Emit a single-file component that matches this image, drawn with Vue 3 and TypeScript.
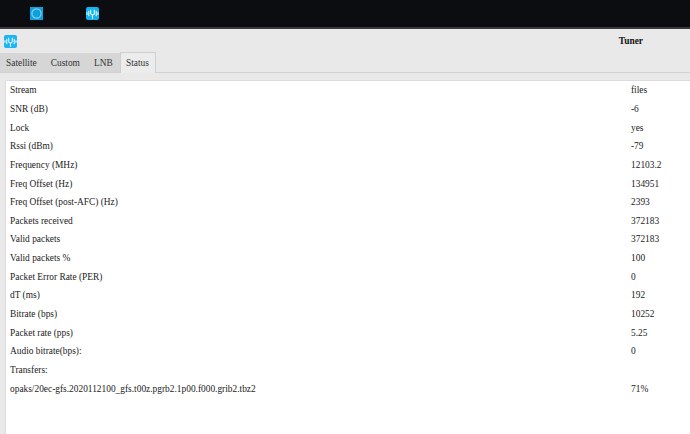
<script setup lang="ts">
const rows: [string, string][] = [
  ['Stream', 'files'], ['SNR (dB)', '-6'], ['Lock', 'yes'], ['Rssi (dBm)', '-79'],
  ['Frequency (MHz)', '12103.2'], ['Freq Offset (Hz)', '134951'], ['Freq Offset (post-AFC) (Hz)', '2393'],
  ['Packets received', '372183'], ['Valid packets', '372183'], ['Valid packets %', '100'],
  ['Packet Error Rate (PER)', '0'], ['dT (ms)', '192'], ['Bitrate (bps)', '10252'],
  ['Packet rate (pps)', '5.25'], ['Audio bitrate(bps):', '0'], ['Transfers:', ''],
  ['opaks/20ec-gfs.2020112100_gfs.t00z.pgrb2.1p00.f000.grib2.tbz2', '71%'],
]
const tabs = ['Satellite', 'Custom', 'LNB']
const logo = 'M6.5 8v3.5M4.7 3v3.3C4.7 7.4 5.5 8 6.5 8s1.8-.6 1.8-1.7V3M2.8 4.3v4.4M10.2 4.3v4.4M1 5.6v1.8M12 5.6v1.8'
</script>

<template>
  <div class="page">
    <div class="taskbar">
      <span class="task-icon square">
        <svg width="13" height="13" viewBox="0 0 13 13"><circle cx="6.5" cy="6.5" r="4.6" fill="none" stroke="#7fd0f2" stroke-width="1.2" /></svg>
      </span>
      <span class="task-icon rounded">
        <svg width="13" height="13" viewBox="0 0 13 13"><path :d="logo" fill="none" stroke="#e4f7ff" stroke-width="1.1" stroke-linecap="round" /></svg>
      </span>
    </div>
    <div class="window">
      <div class="title-row">
        <span class="app-icon">
          <svg width="13" height="13" viewBox="0 0 13 13"><path :d="logo" fill="none" stroke="#e4f7ff" stroke-width="1.1" stroke-linecap="round" /></svg>
        </span>
        <span class="title">Tuner</span>
      </div>
      <div class="tabline">
        <div class="tabbar">
          <span v-for="t in tabs" :key="t" class="tab">{{ t }}</span>
        </div>
        <span class="tab active">Status</span>
      </div>
      <div class="panel">
        <div v-for="r in rows" :key="r[0]" class="row">
          <span class="label">{{ r[0] }}</span>
          <span class="value">{{ r[1] }}</span>
        </div>
      </div>
    </div>
  </div>
</template>

<style>
html, body { margin: 0; overflow: hidden; }
</style>

<style scoped>
.page {
  width: 690px;
  height: 434px;
  display: flex;
  flex-direction: column;
  overflow: hidden;
  font-family: "Liberation Serif", serif;
  font-size: 9.4px;
  color: #222;
}
.taskbar {
  height: 29px;
  flex: none;
  box-sizing: border-box;
  background: #0c0d11;
  border-bottom: 2px solid #3a3a3a;
  display: flex;
  align-items: center;
  padding: 0 0 0 30px;
  gap: 43px;
}
.task-icon {
  width: 13px;
  height: 13px;
  display: block;
  background: #0f9fdc;
}
.task-icon.rounded { background: #12b4f2; border-radius: 2px; }
.task-icon svg, .app-icon svg { display: block; }
.window {
  flex: 1;
  min-height: 0;
  display: flex;
  flex-direction: column;
  background: #e9e9e9;
}
.title-row {
  height: 23px;
  flex: none;
  display: flex;
  justify-content: space-between;
  align-items: flex-start;
  padding: 6px 47px 0 4px;
  box-sizing: border-box;
}
.app-icon {
  width: 13px;
  height: 13px;
  background: #1bb4f5;
  border-radius: 2px;
}
.title { font-weight: bold; font-size: 9.4px; color: #111; line-height: 12px; }
.tabline {
  height: 21px;
  flex: none;
  box-sizing: border-box;
  display: flex;
  border-bottom: 1px solid #d2d2d2;
}
.tabbar {
  display: flex;
  width: 120px;
  margin-top: 1px;
  padding-left: 6px;
  box-sizing: border-box;
  background: #d6d6d6;
}
.tab {
  padding: 0 7px;
  line-height: 20px;
  color: #333;
}
.tab:first-child { padding-left: 0; }
.tab.active {
  width: 36px;
  height: 21px;
  box-sizing: border-box;
  background: #ececec;
  border: 1px solid #cfcfcf;
  border-bottom: none;
  padding: 0 0 0 5px;
  line-height: 20px;
}
.panel {
  flex: 1;
  margin: 7px 0 0 5px;
  padding: 0 0 0 4px;
  background: #fff;
  border-top: 1px solid #dcdcdc;
  border-left: 1px solid #dcdcdc;
  display: flex;
  flex-direction: column;
}
.row {
  height: 18.65px;
  flex: none;
  display: flex;
  align-items: center;
  color: #222;
}
.label { width: 621px; flex: none; white-space: nowrap; }
.value { white-space: nowrap; }
</style>
